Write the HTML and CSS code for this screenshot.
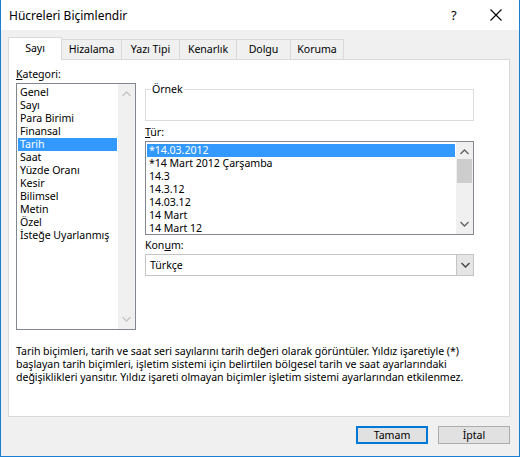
FILE: index.html
```html
<!DOCTYPE html>
<html lang="tr">
<head>
<meta charset="utf-8">
<link rel="stylesheet" href="styles.css">
</head>
<body>
<div class="window">
  <div class="titlebar">
    <span class="title">Hücreleri Biçimlendir</span>
    <span class="help">?</span>
    <span class="close">
      <svg width="12" height="12" viewBox="0 0 12 12"><path d="M0.5 0.5 L11.5 11.5 M11.5 0.5 L0.5 11.5" stroke="#000" stroke-width="1.1" fill="none"/></svg>
    </span>
  </div>
  <div class="body">
    <div class="tabs">
      <div class="tab active w-sayi">Sayı</div>
      <div class="tab w-hiz">Hizalama</div>
      <div class="tab w-yazi">Yazı Tipi</div>
      <div class="tab w-ken">Kenarlık</div>
      <div class="tab w-dol">Dolgu</div>
      <div class="tab w-kor">Koruma</div>
    </div>
    <div class="panel">
      <div class="columns">
        <div class="leftcol">
          <div class="label"><u>K</u>ategori:</div>
          <div class="listbox catlist">
            <ul class="items">
              <li>Genel</li>
              <li>Sayı</li>
              <li>Para Birimi</li>
              <li>Finansal</li>
              <li class="sel">Tarih</li>
              <li>Saat</li>
              <li>Yüzde Oranı</li>
              <li>Kesir</li>
              <li>Bilimsel</li>
              <li>Metin</li>
              <li>Özel</li>
              <li>İsteğe Uyarlanmış</li>
            </ul>
            <div class="scrollbar disabled">
              <svg class="arr" width="9" height="6" viewBox="0 0 9 6"><path d="M0.5 5 L4.5 1 L8.5 5" stroke="#c4c4c4" stroke-width="1.3" fill="none"/></svg>
              <div class="track"></div>
              <svg class="arr" width="9" height="6" viewBox="0 0 9 6"><path d="M0.5 1 L4.5 5 L8.5 1" stroke="#c4c4c4" stroke-width="1.3" fill="none"/></svg>
            </div>
          </div>
        </div>
        <div class="rightcol">
          <div class="group">
            <span class="legend">Örnek</span>
          </div>
          <div class="label tur"><u>T</u>ür:</div>
          <div class="listbox typelist">
            <ul class="items">
              <li class="sel">*14.03.2012</li>
              <li>*14 Mart 2012 Çarşamba</li>
              <li>14.3</li>
              <li>14.3.12</li>
              <li>14.03.12</li>
              <li>14 Mart</li>
              <li>14 Mart 12</li>
            </ul>
            <div class="scrollbar">
              <svg class="arr" width="9" height="6" viewBox="0 0 9 6"><path d="M0.5 5 L4.5 1 L8.5 5" stroke="#606060" stroke-width="1.3" fill="none"/></svg>
              <div class="track"><div class="thumb"></div></div>
              <svg class="arr" width="9" height="6" viewBox="0 0 9 6"><path d="M0.5 1 L4.5 5 L8.5 1" stroke="#606060" stroke-width="1.3" fill="none"/></svg>
            </div>
          </div>
          <div class="label konum">Kon<u>u</u>m:</div>
          <div class="combo">
            <span class="combotext">Türkçe</span>
            <span class="dropbtn">
              <svg width="9" height="6" viewBox="0 0 9 6"><path d="M0.5 1 L4.5 5 L8.5 1" stroke="#404040" stroke-width="1.3" fill="none"/></svg>
            </span>
          </div>
        </div>
      </div>
      <p class="desc">Tarih biçimleri, tarih ve saat seri sayılarını tarih değeri olarak görüntüler. Yıldız işaretiyle (*)<br>başlayan tarih biçimleri, işletim sistemi için belirtilen bölgesel tarih ve saat ayarlarındaki<br>değişiklikleri yansıtır. Yıldız işareti olmayan biçimler işletim sistemi ayarlarından etkilenmez.</p>
    </div>
    <div class="buttons">
      <button class="btn default">Tamam</button>
      <button class="btn">İptal</button>
    </div>
  </div>
</div>
</body>
</html>
```
FILE: styles.css
```css
* { box-sizing: border-box; }
html, body { margin: 0; padding: 0; }
body {
  width: 520px;
  height: 457px;
  font-family: "Noto Sans", "Open Sans", sans-serif;
  font-size: 10.6px;
  letter-spacing: -0.05px;
  color: #000;
  background: #fff;
  overflow: hidden;
}
.window {
  width: 520px;
  height: 457px;
  border: 1px solid #1a7fd4;
  border-top: none;
  display: flex;
  flex-direction: column;
  background: #f0f0f0;
}
.titlebar {
  height: 30px;
  background: #fff;
  display: flex;
  align-items: center;
  padding-left: 8px;
  flex: none;
}
.title {
  font-size: 12px;
  letter-spacing: 0;
  flex: 1;
}
.help {
  font-size: 13px;
  width: 14px;
  margin-right: 25px;
}
.close {
  width: 12px;
  height: 12px;
  margin-right: 17px;
  display: flex;
}
.body {
  flex: 1;
  padding: 7px 9px 0 7px;
  display: flex;
  flex-direction: column;
}
.tabs {
  display: flex;
  height: 22px;
  align-items: flex-end;
  position: relative;
  z-index: 1;
}
.tab {
  height: 20px;
  border: 1px solid #d9d9d9;
  border-left: none;
  border-bottom: none;
  background: #f0f0f0;
  display: flex;
  align-items: center;
  justify-content: center;
  line-height: 1;
}
.w-sayi { width: 54px; }
.w-hiz { width: 60px; }
.w-yazi { width: 58px; }
.w-ken { width: 57px; }
.w-dol { width: 54px; }
.w-kor { width: 53px; }
.tab.active {
  height: 23px;
  margin-bottom: -1px;
  border-left: 1px solid #d9d9d9;
  background: #fff;
  padding-bottom: 1px;
}
.panel {
  height: 358px;
  background: #fff;
  border: 1px solid #d9d9d9;
  padding: 7px 7px 0 7px;
}
.columns {
  display: flex;
  gap: 9px;
}
.leftcol {
  width: 120px;
  display: flex;
  flex-direction: column;
}
.label {
  height: 16px;
  line-height: 14px;
}
.listbox {
  border: 1px solid #828790;
  display: flex;
  background: #fff;
}
.catlist {
  height: 247px;
}
.items {
  list-style: none;
  margin: 0;
  padding: 2px 1px;
  flex: 1;
}
.items li {
  height: 13px;
  line-height: 13px;
  padding-left: 2px;
  white-space: nowrap;
}
.items li.sel {
  background: #3399ff;
  color: #fff;
}
.scrollbar {
  width: 17px;
  background: #f0f0f0;
  display: flex;
  flex-direction: column;
  align-items: center;
  padding: 5px 0 5px;
}
.scrollbar .arr { flex: none; margin: 2px 0; }
.track {
  flex: 1;
  width: 100%;
  padding: 2px 1px 0;
}
.thumb {
  height: 24px;
  background: #cdcdcd;
}
.rightcol {
  width: 329px;
  display: flex;
  flex-direction: column;
  padding-top: 22px;
}
.group {
  height: 32px;
  border: 1px solid #dcdcdc;
  position: relative;
}
.legend {
  position: absolute;
  top: -8px;
  left: 5px;
  background: #fff;
  padding: 0 1px;
  line-height: 14px;
}
.tur {
  margin-top: 4px;
  height: 16px;
}
.typelist {
  height: 94px;
}
.konum {
  margin-top: 3px;
  height: 16px;
}
.combo {
  height: 22px;
  border: 1px solid #c4c4c4;
  display: flex;
  align-items: center;
  background: #fff;
}
.combotext {
  flex: 1;
  padding-left: 4px;
}
.dropbtn {
  width: 17px;
  height: 20px;
  background: #e5e5e5;
  border-left: 1px solid #c4c4c4;
  display: flex;
  align-items: center;
  justify-content: center;
}
.desc {
  margin: 15px 0 0;
  line-height: 13px;
  white-space: nowrap;
}
.buttons {
  display: flex;
  justify-content: flex-end;
  gap: 10px;
  padding-top: 9px;
}
.btn {
  width: 72px;
  height: 18px;
  font-family: inherit;
  font-size: 10.6px;
  background: #e1e1e1;
  border: 1px solid #adadad;
  padding: 0;
  color: #000;
}
.btn.default {
  border: 2px solid #0078d7;
}
```
